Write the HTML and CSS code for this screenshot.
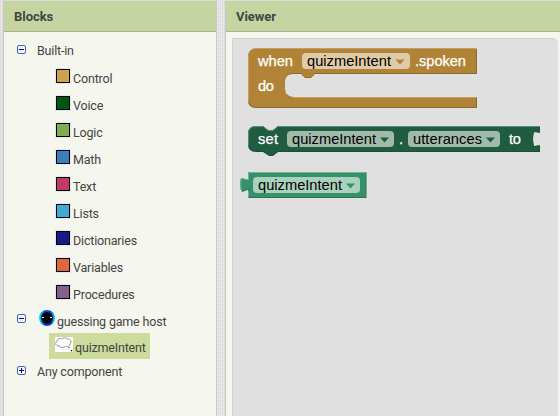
FILE: index.html
```html
<!DOCTYPE html>
<html lang="en">
<head>
<meta charset="utf-8">
<title>Blocks editor</title>
<link rel="stylesheet" href="styles.css">
</head>
<body>
<main class="workspace">
  <section class="panel palette">
    <h2 class="panel-title">Blocks</h2>
    <div class="tree">
      <div class="row"><svg class="toggle" viewBox="0 0 9 9"><rect x=".5" y=".5" width="8" height="8" rx="1.5"/><path d="M2 4.5h5"/></svg><span class="label">Built-in</span></div>
      <div class="row leaf"><i class="swatch control"></i><span class="label">Control</span></div>
      <div class="row leaf"><i class="swatch voice"></i><span class="label">Voice</span></div>
      <div class="row leaf"><i class="swatch logic"></i><span class="label">Logic</span></div>
      <div class="row leaf"><i class="swatch math"></i><span class="label">Math</span></div>
      <div class="row leaf"><i class="swatch text"></i><span class="label">Text</span></div>
      <div class="row leaf"><i class="swatch lists"></i><span class="label">Lists</span></div>
      <div class="row leaf"><i class="swatch dictionaries"></i><span class="label">Dictionaries</span></div>
      <div class="row leaf"><i class="swatch variables"></i><span class="label">Variables</span></div>
      <div class="row leaf"><i class="swatch procedures"></i><span class="label">Procedures</span></div>
      <div class="row host"><svg class="toggle" viewBox="0 0 9 9"><rect x=".5" y=".5" width="8" height="8" rx="1.5"/><path d="M2 4.5h5"/></svg>
        <svg class="skill" viewBox="0 0 16 16"><defs><linearGradient id="ring"><stop offset="0" stop-color="#00e5f5"/><stop offset=".35" stop-color="#0844e8"/><stop offset=".7" stop-color="#0844e8"/><stop offset="1" stop-color="#00d5f5"/></linearGradient></defs><circle cx="8" cy="8" r="8" fill="url(#ring)"/><circle cx="8" cy="8" r="5.900"/><path d="M3 7.500h2M11 7.500h2" stroke="#fff"/></svg><span class="label">guessing game host</span></div>
      <div class="row selected"><svg class="thought" viewBox="0 0 18 15"><path fill="#fff" d="M0 0h18v15H0z"/><path d="M4 9C0 9 0 5 2 4.500C2 1 6 1 7 2C9 0 12 1 13 2C16 2 17 5 15 7C15 9 12 10 11 9C9 11 6 11 4 9Z" fill="#fff" stroke="#777" stroke-width=".9" stroke-dasharray="2 .4"/><path d="M13 10.500h2" stroke="#888"/><path d="M16 13h1.200v1.200h-1.200z"/></svg><span class="label">quizmeIntent</span></div>
      <div class="row"><svg class="toggle" viewBox="0 0 9 9"><rect x=".5" y=".5" width="8" height="8" rx="1.5"/><path d="M2 4.500h5M4.500 2v5"/></svg><span class="label">Any component</span></div>
    </div>
  </section>
  <section class="panel viewer">
    <h2 class="panel-title">Viewer</h2>
    <div class="canvas">
      <svg class="blocks" viewBox="233 39 325 377">
        <g class="event">
          <path class="shadow" d="M256 49H477V74H315L311 78H305L301 74H293Q285 74 285 82V89Q285 97 293 97H477V108H256Q248 108 248 100V57Q248 49 256 49Z"/>
          <path class="body" d="M256 49H476V73H315L311 77H305L301 73H293Q285 73 285 82V89Q285 98 293 98H476V107H256Q249 107 249 100V57Q249 49 256 49Z"/>
          <path class="shine" d="M248.500 101V57Q248.500 48.500 256 48.500H476.500M287 94Q289 97.500 294 97.500H476.500"/>
          <rect class="field" x="302" y="53" width="108" height="16" rx="4"/>
          <path class="body" d="M395.500 59.500h9l-4.500 5z"/>
          <text x="258" y="66" textLength="35">when</text>
          <text class="value" x="307" y="66" textLength="84">quizmeIntent</text>
          <text x="415" y="66" textLength="51">.spoken</text>
          <text x="258" y="91" textLength="16">do</text>
        </g>
        <g class="setter">
          <path class="shadow" d="M256 126H263L268 130H273L278 126H540V133L534 132Q532 139 534 146L540 145V152H278L273 156H269L263 152H256Q248 152 248 144V134Q248 126 256 126Z"/>
          <path class="body" d="M256 127H263L268 131H273L278 127H539V132L534 131Q532 139 534 147L539 146V151H278L273 155H269L264 151H256Q249 151 249 144V134Q249 127 256 127Z"/>
          <path class="shine" d="M248.500 145V134Q248.500 126.500 256 126.500H263L268 130.500H273L278 126.500H540"/>
          <rect class="field" x="287" y="131" width="107" height="16" rx="4"/>
          <path class="body" d="M380 137.500h9l-4.500 5z"/>
          <rect class="field" x="408" y="131" width="92" height="16" rx="4"/>
          <path class="body" d="M486 137.500h9l-4.500 5z"/>
          <text x="258" y="144" textLength="20">set</text>
          <text class="value" x="292" y="144" textLength="84">quizmeIntent</text>
          <text x="399" y="144">.</text>
          <text class="value" x="413" y="144" textLength="69">utterances</text>
          <text x="509" y="144" textLength="12">to</text>
        </g>
        <g class="getter">
          <path class="shadow" d="M248 172H366.500V198H248V190L242 192Q239 185 241 178L248 180Z"/>
          <path class="body" d="M249 173H365.500V197H249V189L242 191Q240 185 242 179L249 181Z"/>
          <path class="shine" d="M248.500 197.500V191M241 190Q240 184 241.500 178.500L248.500 180V172.500H366"/>
          <rect class="field" x="253" y="177" width="107" height="16" rx="4"/>
          <path class="body" d="M346 183.500h9l-4.500 5z"/>
          <text class="value" x="258" y="190" textLength="84">quizmeIntent</text>
        </g>
      </svg>
    </div>
  </section>
</main>
</body>
</html>
```
FILE: styles.css
```css
* { box-sizing: border-box; }
body {
  margin: 0;
  overflow: hidden;
  background-color: #ebebeb;
  background-image:
    linear-gradient(90deg, rgba(0, 0, 0, .04) 50%, transparent 50%),
    linear-gradient(rgba(0, 0, 0, .04) 50%, transparent 50%);
  background-size: 2px 2px;
  font-family: Roboto, "Liberation Sans", sans-serif;
  color: #444;
}
.workspace {
  display: grid;
  grid-template-columns: 214px 1fr;
  gap: 8px;
  height: 416px;
  padding: 1px 0 0 3px;
}
.panel {
  border-left: 1px solid #c8c8c8;
  background: #f5f7ee;
}
.palette { border-right: 1px solid #c8c8c8; }
.panel-title {
  height: 31px;
  margin: 0;
  padding-left: 10px;
  border-bottom: 1px solid #a9b394;
  background: #c5d5a2;
  font-size: 13px;
  line-height: 31px;
  letter-spacing: -.05px;
}
.tree { padding-top: 5px; }
.row {
  display: flex;
  align-items: center;
  height: 27px;
  padding-left: 13px;
  font-size: 12.5px;
  letter-spacing: -.18px;
  white-space: nowrap;
}
.label { line-height: 18px; padding-top: 1px; }
.toggle {
  width: 9px;
  height: 9px;
  margin: 0 11px 2px 0;
  fill: #f2f7ff;
  stroke: #4664a8;
}
.toggle path { stroke: #0000aa; }
.leaf { padding-left: 52px; }
.leaf .label { padding-top: 3px; }
.swatch {
  width: 14px;
  height: 14px;
  margin: 0 3px 4px 0;
  border: 1px solid #000;
  box-shadow: 0 0 0 1px #e0e7ef;
}
.control { background: #cca24a; }
.voice { background: #005511; }
.logic { background: #80ad50; }
.math { background: #3e7dbb; }
.text { background: #c13b65; }
.lists { background: #40aad5; }
.dictionaries { background: #1b1888; }
.variables { background: #df683b; }
.procedures { background: #85608b; }
.host { margin-bottom: -1px; }
.host .toggle { margin: 0 13px 4px 0; }
.host .label { padding-top: 3px; }
.skill { width: 16px; height: 16px; margin: 0 2px 5px 0; }
.selected {
  width: 101px;
  height: 26px;
  margin: 0 0 -1px 45px;
  padding-left: 6px;
  background: #cddb9d;
}
.selected .label { padding-top: 3px; }
.thought { width: 18px; height: 15px; margin: 0 2px 4px 0; }
.canvas {
  height: 378px;
  margin: 6px 2px 0 6px;
  border: 1px solid #d0d0d0;
  border-right: 0;
  border-bottom: 0;
  border-radius: 0 6px 0 0;
  background: #e0e0e0;
}
.blocks {
  display: block;
  width: 325px;
  height: 377px;
  font: 14.67px "Liberation Sans", sans-serif;
}
.blocks text { fill: #fff; stroke: #fff; stroke-width: .25px; }
.blocks .value { fill: #000; stroke: none; }
.blocks .shine { fill: none; stroke-width: 1px; }
.event .shadow { fill: #8d6b2c; }
.event .body { fill: #b18337; }
.event .shine { stroke: #c59d5e; }
.event .field { fill: #dfcba7; }
.setter .shadow { fill: #1d5033; }
.setter .body { fill: #205d40; }
.setter .shine { stroke: #568c70; }
.setter .field { fill: #a1baab; }
.getter .shadow { fill: #2b7456; }
.getter .body { fill: #36916a; }
.getter .shine { stroke: #70b292; }
.getter .field { fill: #a9d1bd; }
```
